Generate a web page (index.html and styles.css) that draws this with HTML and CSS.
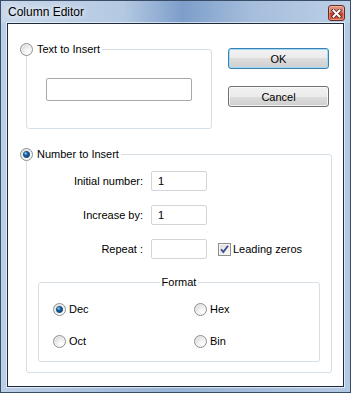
FILE: index.html
```html
<!DOCTYPE html>
<html lang="en">
<head>
    <meta charset="UTF-8">
    <title>Column Editor</title>
    <link rel="stylesheet" href="styles.css">
</head>
<body>
    <div class="window">
        <div class="titlebar">
            <span class="title">Column Editor</span>
            <span class="close">
                <svg width="11" height="9" viewBox="0 0 11 9">
                    <path d="M2.5 1.5 L8.5 7.5 M8.5 1.5 L2.5 7.5" stroke="#5a2018" stroke-width="3.6" stroke-linecap="square"/>
                    <path d="M2.5 1.5 L8.5 7.5 M8.5 1.5 L2.5 7.5" stroke="#fff" stroke-width="2" stroke-linecap="square"/>
                </svg>
            </span>
        </div>
        <div class="client">
            <div class="top-row">
                <div class="group text-group">
                    <div class="group-title"><span class="radio"></span>Text to Insert</div>
                    <input type="text" class="edit wide">
                </div>
                <div class="buttons">
                    <button class="btn default">OK</button>
                    <button class="btn">Cancel</button>
                </div>
            </div>
            <div class="group number-group">
                <div class="group-title"><span class="radio checked"></span>Number to Insert</div>
                <div class="fields">
                    <label class="field-label">Initial number:</label>
                    <input type="text" class="edit small" value="1">
                    <span></span>
                    <label class="field-label">Increase by:</label>
                    <input type="text" class="edit small" value="1">
                    <span></span>
                    <label class="field-label">Repeat :</label>
                    <input type="text" class="edit small">
                    <span class="check-row">
                        <span class="checkbox">
                            <svg width="11" height="11" viewBox="0 0 11 11"><path d="M2 5.2 L4.3 8 L9 1.8" fill="none" stroke="#3b4b8e" stroke-width="1.8"/></svg>
                        </span>
                        Leading zeros
                    </span>
                </div>
                <div class="group format-group">
                    <div class="group-title center">Format</div>
                    <div class="format-grid">
                        <span class="option"><span class="radio checked"></span>Dec</span>
                        <span class="option"><span class="radio"></span>Hex</span>
                        <span class="option"><span class="radio"></span>Oct</span>
                        <span class="option"><span class="radio"></span>Bin</span>
                    </div>
                </div>
            </div>
        </div>
    </div>
</body>
</html>
```

FILE: styles.css
```css
* { box-sizing: border-box; }
body { margin: 0; font-family: "Liberation Sans", Arial, sans-serif; font-size: 11px; color: #000; background: #fff; }
.window { width: 351px; height: 393px; border: 1px solid #3a4d66; background: linear-gradient(to right, #bccfe7, #98b3d6 50%, #b3c8e3); padding: 0 6px 5px; display: flex; flex-direction: column; }
.titlebar { height: 22px; margin: 0 -6px; padding: 0 5px 0 7px; display: flex; justify-content: space-between; align-items: flex-start; background: linear-gradient(to right, #c7d7ea 0%, #b4c9e2 35%, #7d9eca 52%, #a6bedc 72%, #bcd0e7 100%); }
.title { font-size: 12px; line-height: 22px; text-shadow: 0 0 6px #fff, 0 0 10px rgba(255,255,255,0.8); }
.close { width: 17px; height: 16px; margin-top: 4px; border: 1px solid #6a2a22; border-radius: 3px; background: linear-gradient(#e49a88 0%, #d27560 45%, #c0402b 52%, #d5644c 100%); display: flex; justify-content: center; align-items: center; box-shadow: inset 0 0 0 1px rgba(255,210,200,0.45); }
.client { flex: 1; background: #fff; border: 1px solid #1d2a3a; box-shadow: 0 0 0 1px rgba(255,255,255,0.6); padding: 24px 0 0 18px; }
.top-row { display: flex; align-items: flex-start; }
.group { border: 1px solid #d5dfe5; border-radius: 3px; }
.group-title { display: flex; align-items: center; height: 13px; line-height: 13px; margin: -7px 0 0 -7px; padding-right: 2px; background: #fff; width: max-content; }
.group-title.center { margin: -7px auto 0; padding: 0 2px; }
.text-group { width: 186px; height: 80px; margin-top: 1px; }
.buttons { margin-left: 16px; display: flex; flex-direction: column; gap: 17px; }
.btn { width: 101px; height: 21px; font-family: inherit; font-size: 11px; color: #000; border: 1px solid #707070; border-radius: 3px; background: linear-gradient(#f2f2f2 0%, #ebebeb 50%, #dddddd 50%, #cfcfcf 100%); box-shadow: inset 0 0 0 1px rgba(255,255,255,0.7); padding: 0; }
.btn.default { border-color: #3c7fb1; box-shadow: inset 0 0 0 1px #9fdcf6; }
.edit { font-family: inherit; font-size: 11px; color: #000; background: #fff; border: 1px solid #abadb3; border-radius: 2px; padding: 0 0 0 6px; outline: none; }
.edit.wide { width: 146px; height: 23px; margin: 22px 0 0 19px; border-color: #a9a9a9; }
.edit.small { width: 56px; height: 20px; border-color: #d3d5d9; }
.number-group { width: 306px; height: 219px; margin-top: 25px; }
.fields { display: grid; grid-template-columns: 116px 56px auto; grid-auto-rows: 20px; column-gap: 8px; row-gap: 14px; margin-top: 10px; }
.field-label { text-align: right; line-height: 20px; }
.check-row { display: flex; align-items: center; gap: 2px; margin-left: 3px; }
.checkbox { width: 13px; height: 13px; border: 1px solid #8f8f8f; background: linear-gradient(135deg, #dcdcdc, #fbfbfb); box-shadow: inset 0 0 0 1px #f4f4f4; display: flex; justify-content: center; align-items: center; }
.format-group { width: 282px; height: 80px; margin: 23px 0 0 11px; }
.format-grid { display: grid; grid-template-columns: 141px auto; grid-auto-rows: 13px; row-gap: 19px; margin-top: 14px; padding-left: 14px; }
.option { display: flex; align-items: center; line-height: 13px; }
.option .radio { margin-right: 3px; }
.radio { flex: none; width: 13px; height: 13px; margin-right: 4px; border-radius: 50%; border: 1px solid #8d8f90; background: radial-gradient(circle at 65% 70%, #ffffff 0%, #f1f1f1 35%, #d2d2d2 85%); box-shadow: inset 0 0 0 1px rgba(255,255,255,0.6); }
.radio.checked { background: radial-gradient(circle at 42% 40%, #9fdcff 0, rgba(90,170,230,0.6) 1.2px, transparent 2.2px), radial-gradient(circle at 50% 50%, #1e73b6 0, #0c4a80 2.6px, #4d6f8d 3.4px, transparent 3.8px), radial-gradient(circle at 65% 70%, #ffffff 0%, #f1f1f1 35%, #d2d2d2 85%); }
```
